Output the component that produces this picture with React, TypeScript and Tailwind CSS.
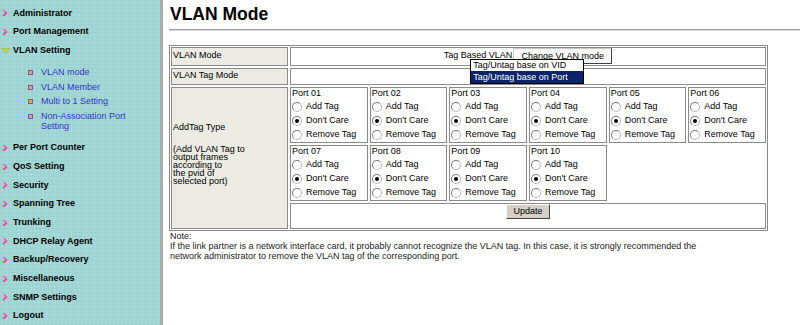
const topItems = ["Administrator", "Port Management"];
const subItems = ["VLAN mode", "VLAN Member", "Multi to 1 Setting"];
const bottomItems = [
  "Per Port Counter",
  "QoS Setting",
  "Security",
  "Spanning Tree",
  "Trunking",
  "DHCP Relay Agent",
  "Backup/Recovery",
  "Miscellaneous",
  "SNMP Settings",
  "Logout",
];
const portsRow1 = ["01", "02", "03", "04", "05", "06"];
const portsRow2 = ["07", "08", "09", "10"];

// pink menu arrow
const Arrow = () => (
  <svg width="6" height="6" viewBox="0 0 6 6" className="shrink-0">
    <polygon points="0,0 2.6,0 5.6,3 2.6,6 0,6 2.6,3" fill="#e4509a" />
    <polygon points="0,0 1.4,0 4,3 2.6,3" fill="#f39cc6" />
  </svg>
);

// yellow expanded arrow
const OpenArrow = () => (
  <svg width="7" height="5" viewBox="0 0 7 5" className="shrink-0">
    <polygon points="0,0 2.3,0 3.5,1.8 4.7,0 7,0 3.5,5" fill="#e6e61a" stroke="#8c8c1c" strokeWidth="0.5" />
  </svg>
);

const SubBullet = () => (
  <span className="block w-[5px] h-[5px] shrink-0 bg-[#eca646] border border-[#7656b8]" />
);

const MenuItem = ({ label, open }: { label: string; open?: boolean }) => (
  <div className="flex items-center h-[18.7px] pl-[2px]">
    {open ? <OpenArrow /> : <Arrow />}
    <span className={`${open ? "ml-[4px]" : "ml-[5px]"} text-[9px] font-bold text-black whitespace-nowrap`}>{label}</span>
  </div>
);

const SubItem = ({ children }: { children: React.ReactNode }) => (
  <div className="flex items-start pl-[28px] py-[2px]">
    <span className="mt-[3px]">
      <SubBullet />
    </span>
    <span className="ml-[8px] text-[9px] leading-[10.5px] text-[#3434cc]">{children}</span>
  </div>
);

const Radio = ({ checked }: { checked?: boolean }) => (
  <span className="relative flex items-center justify-center w-[10px] h-[10px] rounded-full bg-white border border-t-[#7a7a7a] border-l-[#7a7a7a] border-r-[#b8b8b8] border-b-[#b8b8b8] shrink-0">
    {checked && <span className="block w-[4px] h-[4px] rounded-full bg-black" />}
  </span>
);

const PortCell = ({ port }: { port: string }) => (
  <div className="border border-[#8a8a8a] bg-white flex flex-col">
    <div className="h-[12px] leading-[11px] pl-[1px] text-[9px]">Port {port}</div>
    {["Add Tag", "Don't Care", "Remove Tag"].map((opt) => (
      <div key={opt} className="h-[14px] flex items-center pl-[1px]">
        <Radio checked={opt === "Don't Care"} />
        <span className="ml-[4px] text-[9px]">{opt}</span>
      </div>
    ))}
  </div>
);

export default function App() {
  return (
    <div className="w-[800px] h-[325px] flex overflow-hidden bg-white font-['Liberation_Sans',Arial,sans-serif] text-black">
      {/* Sidebar */}
      <aside className="w-[163px] h-full shrink-0 border-r-[3px] border-[#ababab] bg-[#a4d8d6] [background-image:linear-gradient(#9cd2d0_1px,transparent_1px),linear-gradient(90deg,#9cd2d0_1px,transparent_1px)] [background-size:4px_4px] pt-[4px]">
        {topItems.map((t) => (
          <MenuItem key={t} label={t} />
        ))}
        <MenuItem label="VLAN Setting" open />
        <div className="py-[5px]">
          {subItems.map((s) => (
            <SubItem key={s}>{s}</SubItem>
          ))}
          <SubItem>
            Non-Association Port
            <br />
            Setting
          </SubItem>
        </div>
        {bottomItems.map((t) => (
          <MenuItem key={t} label={t} />
        ))}
      </aside>

      {/* Main */}
      <main className="flex-1 pl-[6px] pt-[6px]">
        <h1 className="pl-[1px] text-[17.5px] leading-[17.5px] font-bold">VLAN Mode</h1>
        <div className="mt-[5px] border-t border-b border-t-[#999999] border-b-[#dedede]" />

        <div className="mt-[14px] w-[599px] border border-[#8a8a8a] p-[1px] grid grid-cols-[117px_1fr] grid-rows-[19px_17px_56px_56px_26px] gap-[2px] text-[9px]">
          <div className="border border-[#8a8a8a] bg-[#ecebe3] flex items-center pl-[1px]">VLAN Mode</div>
          <div className="border border-[#8a8a8a] bg-white flex items-center justify-center">
            <span className="mr-[1px]">Tag Based VLAN</span>
            <div className="relative">
              <button className="w-[99px] h-[16px] bg-[#fbfbfb] border border-t-[#c8c8c8] border-l-[#c8c8c8] border-r-[#404040] border-b-[#404040] text-[9px] leading-[13px]">
                Change VLAN mode
              </button>
              <div className="absolute z-10 left-[-43px] top-[11px] w-[114px] border border-black bg-white">
                <div className="h-[11px] leading-[11px] pl-[2px]">Tag/Untag base on VID</div>
                <div className="h-[12px] leading-[12px] pl-[2px] bg-[#0a246a] text-white">Tag/Untag base on Port</div>
              </div>
            </div>
          </div>

          <div className="border border-[#8a8a8a] bg-[#ecebe3] flex items-center pl-[1px]">VLAN Tag Mode</div>
          <div className="border border-[#8a8a8a] bg-white" />

          <div className="row-span-3 border border-[#8a8a8a] bg-[#ecebe3] pl-[1px] pt-[34px]">
            <div className="leading-[10px]">AddTag Type</div>
            <div className="mt-[13px] leading-[8px]">
              (Add VLAN Tag to
              <br />
              output frames
              <br />
              according to
              <br />
              the pvid of
              <br />
              selected port)
            </div>
          </div>
          <div className="grid grid-cols-6 gap-[2px]">
            {portsRow1.map((p) => (
              <PortCell key={p} port={p} />
            ))}
          </div>
          <div className="grid grid-cols-6 gap-[2px]">
            {portsRow2.map((p) => (
              <PortCell key={p} port={p} />
            ))}
          </div>
          <div className="border border-[#8a8a8a] bg-white flex justify-center items-start">
            <button className="w-[44px] h-[15px] bg-[#d4d0c8] border border-t-white border-l-white border-r-[#404040] border-b-[#404040] text-[9px] leading-[12px]">
              Update
            </button>
          </div>
        </div>

        <div className="pl-[1px] text-[9px] leading-[10px] text-[#1a1a1a]">
          <div>Note:</div>
          <div>
            If the link partner is a network interface card, it probably cannot recognize the VLAN tag. In this case, it is strongly recommended the
            <br />
            network administrator to remove the VLAN tag of the corresponding port.
          </div>
        </div>
      </main>
    </div>
  );
}
